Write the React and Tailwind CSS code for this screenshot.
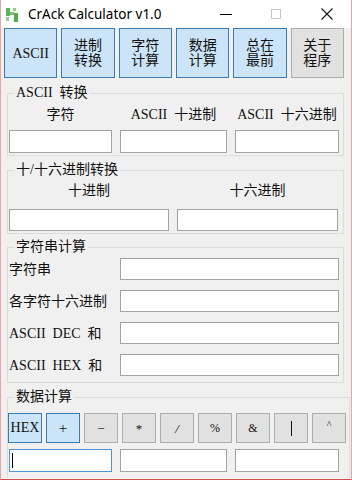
import React from 'react';

const serif = "font-['Liberation_Serif','Noto_Sans_CJK_SC',serif]";

/* ── small pieces ── */
function AppIcon() {
    return (
        <svg width="14" height="14" viewBox="0 0 14 14" className="shrink-0">
            <rect x="0" y="0" width="4" height="8" fill="#5cb35c" />
            <rect x="7" y="0" width="3" height="3" fill="#8fcf8f" />
            <rect x="4" y="4" width="4" height="3" fill="#79c079" />
            <rect x="8" y="5" width="4" height="9" fill="#4fae4f" />
            <rect x="0" y="9" width="3" height="4" fill="#8fcf8f" />
        </svg>
    );
}

function TabBtn({ on, children }) {
    return (
        <div className={`flex h-[50px] items-center justify-center border text-center text-[14px] leading-[15px] text-[#111] ${on ? 'border-[#3d7bad] bg-[#cce4f7]' : 'border-[#adadad] bg-[#e1e1e1]'}`}>
            {children}
        </div>
    );
}

function OpBtn({ on, children }) {
    return (
        <div className={`flex h-[30px] items-center justify-center border text-[13px] leading-none text-[#111] ${on ? 'border-[#3d7bad] bg-[#cce4f7]' : 'border-[#adadad] bg-[#e1e1e1]'}`}>
            {children}
        </div>
    );
}

function Box({ h = 'h-[23px]', focus }) {
    return (
        <div className={`flex items-center bg-white border ${h} ${focus ? 'border-[#4b95d3]' : 'border-[#a3a3a3]'}`}>
            {focus && <div className="ml-[2px] h-[15px] w-[1px] bg-black" />}
        </div>
    );
}

function Group({ title, className, children }) {
    return (
        <fieldset className={`ml-[6px] w-[337px] border border-[#dcdcdc] pl-[1px] pr-[3px] ${className}`}>
            <legend className="ml-[5px] whitespace-pre px-[2px] text-[14px] leading-[16px] text-[#111]">{title}</legend>
            {children}
        </fieldset>
    );
}

export default function App() {
    return (
        <div className={`flex h-[480px] w-[352px] flex-col overflow-hidden border-x border-b border-x-[#eba3a3] border-b-[#d05050] bg-[#f0f0f0] ${serif}`}>
            {/* title bar */}
            <div className="flex h-[28px] shrink-0 items-center bg-white">
                <div className="ml-[5px] mt-[1px]"><AppIcon /></div>
                <span className="ml-[8px] font-['Noto_Sans',sans-serif] text-[13.5px] text-black">CrAck Calculator v1.0</span>
                <div className="ml-auto flex h-full">
                    <div className="flex w-[50px] items-center justify-center">
                        <div className="h-[1px] w-[12px] bg-black" />
                    </div>
                    <div className="flex w-[50px] items-center justify-center">
                        <div className="h-[10px] w-[10px] border border-[#c8c8c8]" />
                    </div>
                    <div className="flex w-[50px] items-center justify-center pl-[2px]">
                        <svg width="12" height="12" viewBox="0 0 12 12">
                            <path d="M0.5 0.5 L11.5 11.5 M11.5 0.5 L0.5 11.5" stroke="#111" strokeWidth="1.1" />
                        </svg>
                    </div>
                </div>
            </div>

            {/* tabs */}
            <div className="ml-[3px] grid w-[340px] grid-cols-6 gap-[4px]">
                <TabBtn on>ASCII</TabBtn>
                <TabBtn on>进制<br />转换</TabBtn>
                <TabBtn on>字符<br />计算</TabBtn>
                <TabBtn on>数据<br />计算</TabBtn>
                <TabBtn on>总在<br />最前</TabBtn>
                <TabBtn>关于<br />程序</TabBtn>
            </div>

            {/* ASCII 转换 */}
            <Group title="ASCII  转换" className="mt-[7px] pb-[2px]">
                <div className="mt-[6px] grid grid-cols-[103px_107px_104px] gap-x-[8px] whitespace-pre text-center text-[14px] leading-[16px] text-[#111]">
                    <span>字符</span>
                    <span>ASCII  十进制</span>
                    <span>ASCII  十六进制</span>
                </div>
                <div className="mt-[7px] grid grid-cols-[103px_107px_104px] gap-x-[8px]">
                    <Box />
                    <Box />
                    <Box />
                </div>
            </Group>

            {/* 十/十六进制转换 */}
            <Group title="十/十六进制转换" className="mt-[6px] pb-[2px]">
                <div className="mt-[5px] grid grid-cols-[160px_161px] gap-x-[8px] text-center text-[14px] leading-[16px] text-[#111]">
                    <span>十进制</span>
                    <span>十六进制</span>
                </div>
                <div className="mt-[10px] grid grid-cols-[160px_161px] gap-x-[8px]">
                    <Box h="h-[22px]" />
                    <Box h="h-[22px]" />
                </div>
            </Group>

            {/* 字符串计算 */}
            <Group title="字符串计算" className="mt-[5px] pb-[6px]">
                <div className="mt-[3px] flex flex-col gap-[10px] text-[14px] text-[#111]">
                    {['字符串', '各字符十六进制', 'ASCII  DEC  和', 'ASCII  HEX  和'].map(label => (
                        <div key={label} className="flex items-center">
                            <span className="w-[111px] whitespace-pre">{label}</span>
                            <div className="w-[219px]"><Box h="h-[22px]" /></div>
                        </div>
                    ))}
                </div>
            </Group>

            {/* 数据计算 */}
            <Group title="数据计算" className="mt-[6px] border-b-0 pb-[6px]">
                <div className="-ml-[1px] mt-[8px] grid w-[338px] grid-cols-9 gap-x-[4px]">
                    <OpBtn on><span className="text-[14px]">HEX</span></OpBtn>
                    <OpBtn on><span className="text-[15px]">+</span></OpBtn>
                    <OpBtn>−</OpBtn>
                    <OpBtn>*</OpBtn>
                    <OpBtn><span className="italic">/</span></OpBtn>
                    <OpBtn><span className="text-[12px]">%</span></OpBtn>
                    <OpBtn><span className="text-[12px]">&amp;</span></OpBtn>
                    <OpBtn><div className="h-[15px] w-[1px] bg-[#111]" /></OpBtn>
                    <OpBtn><span className="-mt-[6px] text-[10px]">^</span></OpBtn>
                </div>
                <div className="mt-[6px] grid grid-cols-[103px_107px_104px] gap-x-[8px]">
                    <Box focus />
                    <Box />
                    <Box />
                </div>
            </Group>
        </div>
    );
}
